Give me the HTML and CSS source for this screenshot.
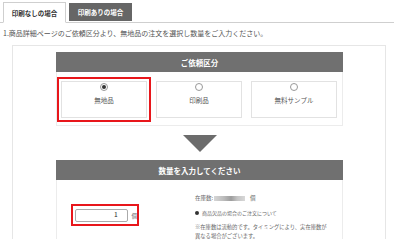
FILE: index.html
```html
<!DOCTYPE html>
<html lang="ja">
<head>
    <meta charset="UTF-8">
    <title>ご注文方法</title>
    <link rel="stylesheet" href="styles.css">
</head>
<body>
    <!-- タブ -->
    <div class="tabs">
        <div class="tab active">印刷なしの場合</div>
        <div class="tab">印刷ありの場合</div>
    </div>

    <p class="intro">1.商品詳細ページのご依頼区分より、無地品の注文を選択し数量をご入力ください。</p>

    <div class="panel">
        <div class="section-head">ご依頼区分</div>
        <div class="options">
            <div class="option-cell selected">
                <div class="option">
                    <span class="radio checked"></span>
                    <span class="option-label">無地品</span>
                </div>
            </div>
            <div class="option-cell">
                <div class="option">
                    <span class="radio"></span>
                    <span class="option-label">印刷品</span>
                </div>
            </div>
            <div class="option-cell">
                <div class="option">
                    <span class="radio"></span>
                    <span class="option-label">無料サンプル</span>
                </div>
            </div>
        </div>

        <div class="arrow"></div>

        <div class="section-head">数量を入力してください</div>
        <div class="qty-box">
            <div class="qty-field">
                <div class="qty-input">1</div>
                <span class="unit">個</span>
            </div>
            <div class="stock">
                <p class="stock-count">在庫数:<span class="blur"></span>個</p>
                <p class="stock-note"><span class="dot"></span>商品欠品の場合のご注文について</p>
                <p class="stock-text">※在庫数は流動的です。タイミングにより、実在庫数が<br>異なる場合がございます。</p>
            </div>
        </div>
    </div>
</body>
</html>
```

FILE: styles.css
```css
* {
    margin: 0;
    padding: 0;
    box-sizing: border-box;
}

body {
    font-family: "Noto Sans CJK JP", "Noto Sans", sans-serif;
    color: #555;
    background: #fff;
    width: 400px;
    height: 240px;
    overflow: hidden;
}

/* タブ */
.tabs {
    display: flex;
    align-items: flex-end;
    gap: 3px;
    margin-right: 6px;
    padding: 2px 0 0 3px;
    border-bottom: 1px solid #cfcfcf;
    height: 23px;
}

.tab {
    width: 63px;
    height: 18px;
    margin-bottom: 1px;
    background: #666;
    color: #fff;
    font-size: 6.5px;
    font-weight: bold;
    display: flex;
    align-items: center;
    justify-content: center;
}

.tab.active {
    height: 21px;
    margin-bottom: -1px;
    background: #fff;
    color: #333;
    border: 1px solid #cfcfcf;
    border-bottom: 1px solid #fff;
}

.intro {
    font-size: 7px;
    line-height: 10px;
    margin: 5px 0 0 3px;
    color: #555;
}

/* パネル */
.panel {
    margin: 7px 14px 0 12px;
    padding: 6px 42px 0 43px;
    border: 1px solid #e6e6e6;
    border-bottom: none;
}

.section-head {
    height: 20px;
    background: #707070;
    color: #fff;
    font-size: 7.5px;
    font-weight: bold;
    display: flex;
    align-items: center;
    justify-content: center;
}

.options {
    display: grid;
    grid-template-columns: repeat(3, 1fr);
    gap: 1px;
    padding: 5px 1px 3px 0;
    border: 1px solid #ececec;
    border-top: none;
}

.option-cell {
    padding: 2px;
    border: 2px solid transparent;
}

.option-cell.selected {
    border-color: #e8161b;
}

.option {
    height: 37px;
    border: 1px solid #e2e2e2;
    display: flex;
    flex-direction: column;
    align-items: center;
    padding-top: 1px;
    gap: 5px;
}

.radio {
    width: 8px;
    height: 8px;
    border: 1px solid #999;
    border-radius: 50%;
    display: flex;
    align-items: center;
    justify-content: center;
}

.radio.checked::after {
    content: "";
    width: 4px;
    height: 4px;
    border-radius: 50%;
    background: #333;
}

.option-label {
    font-size: 6.5px;
    line-height: 9px;
    color: #555;
}

.arrow {
    width: 0;
    height: 0;
    margin: 9px auto 8px;
    border-left: 17px solid transparent;
    border-right: 17px solid transparent;
    border-top: 17px solid #6c6c6c;
}

/* 数量 */
.qty-box {
    display: flex;
    align-items: flex-start;
    padding-left: 14px;
    border-left: 1px solid #ececec;
    border-right: 1px solid #ececec;
    height: 59px;
}

.qty-field {
    margin-top: 24px;
    width: 68px;
    height: 22px;
    border: 2px solid #e8161b;
    padding: 3px 0 2px 2px;
    display: flex;
    align-items: center;
    gap: 3px;
}

.qty-input {
    width: 55px;
    height: 13px;
    border: 1px solid #aaa;
    border-radius: 2px;
    font-size: 5.5px;
    font-weight: bold;
    color: #555;
    text-align: right;
    padding-right: 10px;
    line-height: 11px;
}

.unit {
    font-size: 5.5px;
    color: #666;
}

.stock {
    margin-left: 56px;
    padding-top: 14px;
    color: #666;
}

.stock-count {
    font-size: 5.5px;
    line-height: 8px;
    display: flex;
    align-items: center;
}

.blur {
    display: inline-block;
    width: 31px;
    height: 5px;
    margin: 0 5px 0 1px;
    background: linear-gradient(90deg, #d6d6d6, #bdbdbd 30%, #9d9d9d 55%, #c4c4c4 75%, #d8d8d8);
    filter: blur(0.6px);
}

.stock-note {
    font-size: 5px;
    line-height: 8px;
    margin-top: 7px;
    display: flex;
    align-items: center;
    gap: 3px;
}

.dot {
    width: 4px;
    height: 4px;
    border-radius: 50%;
    background: #333;
}

.stock-text {
    font-size: 5.3px;
    line-height: 9px;
    margin-top: 6px;
}
```
